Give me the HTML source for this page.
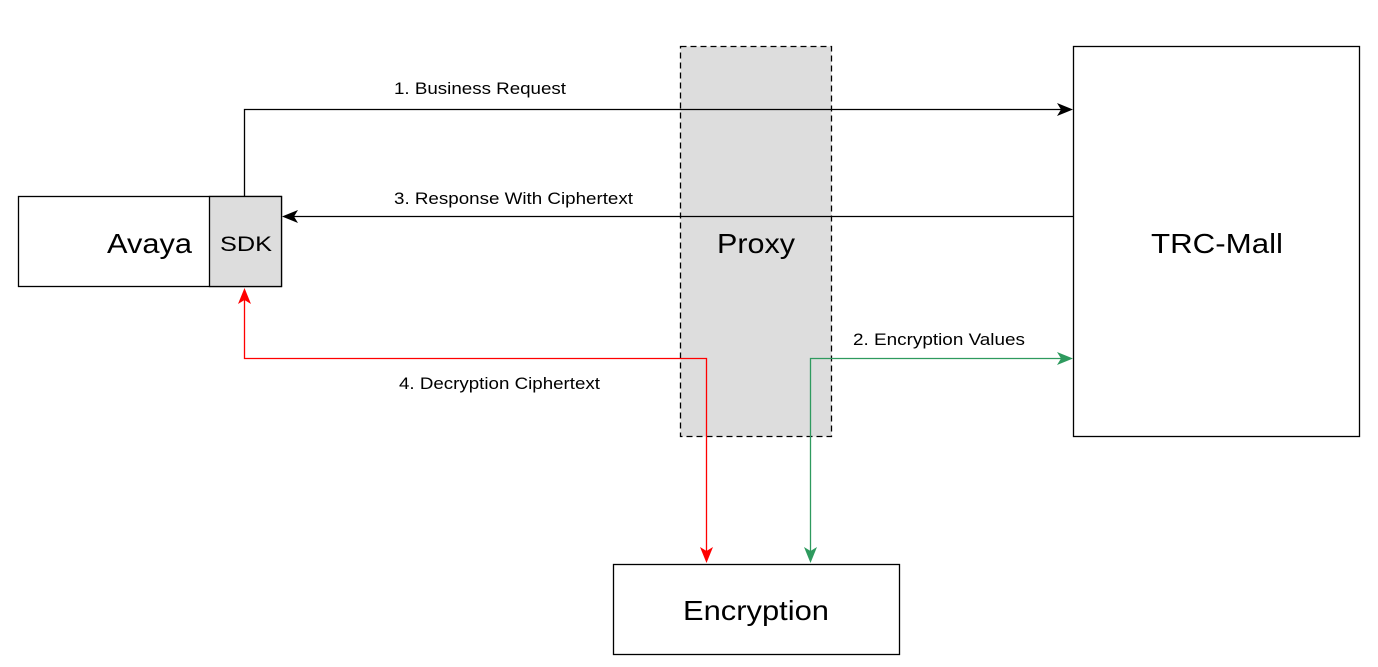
<!DOCTYPE html>
<html><head><meta charset="utf-8"><style>
html,body{margin:0;padding:0;background:#fff;}
svg{display:block;}
text{font-family:"Liberation Sans",Arial,sans-serif;}
</style></head><body>
<svg width="1378" height="667" viewBox="0 0 1378 667" xmlns="http://www.w3.org/2000/svg">
<rect x="0" y="0" width="1378" height="667" fill="#fff"/>
<rect x="680.5" y="46.5" width="151" height="390" fill="#dddddd" stroke="#000" stroke-width="1.3" stroke-dasharray="6,4"/>
<text x="717" y="253" font-size="28" textLength="78" lengthAdjust="spacingAndGlyphs">Proxy</text>
<rect x="1073.5" y="46.5" width="286" height="390" fill="#fff" stroke="#000" stroke-width="1.3"/>
<text x="1151" y="253" font-size="28" textLength="132" lengthAdjust="spacingAndGlyphs">TRC-Mall</text>
<rect x="18.5" y="196.5" width="263" height="90" fill="#fff" stroke="#000" stroke-width="1.3"/>
<rect x="209.5" y="196.5" width="72" height="90" fill="#dddddd" stroke="#000" stroke-width="1.3"/>
<text x="107" y="253" font-size="28" textLength="85" lengthAdjust="spacingAndGlyphs">Avaya</text>
<text x="220" y="251" font-size="21" textLength="52" lengthAdjust="spacingAndGlyphs">SDK</text>
<rect x="613.5" y="564.5" width="286" height="90" fill="#fff" stroke="#000" stroke-width="1.3"/>
<text x="683" y="620" font-size="28" textLength="146" lengthAdjust="spacingAndGlyphs">Encryption</text>
<path d="M244.5 196 V109.5 H1062" fill="none" stroke="#000" stroke-width="1.3"/>
<path d="M1073 109.5 L1057 103 L1061 109.5 L1057 116 Z" fill="#000"/>
<text x="394" y="94" font-size="17" textLength="172" lengthAdjust="spacingAndGlyphs">1. Business Request</text>
<path d="M1073 216.5 H292" fill="none" stroke="#000" stroke-width="1.3"/>
<path d="M282 216.5 L298 210 L294 216.5 L298 223 Z" fill="#000"/>
<text x="394" y="204" font-size="17" textLength="239" lengthAdjust="spacingAndGlyphs">3. Response With Ciphertext</text>
<path d="M706.5 552 V358.5 H244.5 V298" fill="none" stroke="#ff0000" stroke-width="1.3"/>
<path d="M244.5 288 L238 304 L244.5 300 L251 304 Z" fill="#ff0000"/>
<path d="M706.5 563 L700 547 L706.5 551 L713 547 Z" fill="#ff0000"/>
<text x="399" y="389" font-size="17" textLength="201" lengthAdjust="spacingAndGlyphs">4. Decryption Ciphertext</text>
<path d="M810.5 552 V358.5 H1062" fill="none" stroke="#2e9a5e" stroke-width="1.3"/>
<path d="M1073 358.5 L1057 352 L1061 358.5 L1057 365 Z" fill="#2e9a5e"/>
<path d="M810.5 563 L804 547 L810.5 551 L817 547 Z" fill="#2e9a5e"/>
<text x="853" y="345" font-size="17" textLength="172" lengthAdjust="spacingAndGlyphs">2. Encryption Values</text>
</svg>
</body></html>
